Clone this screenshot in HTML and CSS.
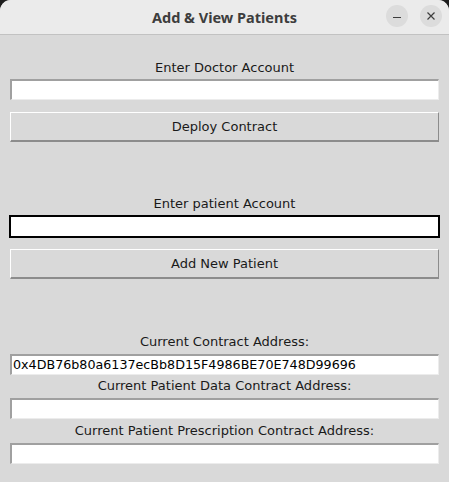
FILE: index.html
```html
<!DOCTYPE html>
<html>
<head>
<meta charset="utf-8">
<link rel="stylesheet" href="styles.css">
</head>
<body>
<div class="window">
  <div class="titlebar">
    <div class="title">Add &amp; View Patients</div>
    <div class="controls">
      <div class="ctl"><svg width="10" height="10" viewBox="0 0 10 10"><path d="M1 6.5h8" stroke="#3d3d3d" stroke-width="1.2"/></svg></div>
      <div class="ctl"><svg width="10" height="10" viewBox="0 0 10 10"><path d="M1.5 1.5l7 7M8.5 1.5l-7 7" stroke="#3d3d3d" stroke-width="1.2"/></svg></div>
    </div>
  </div>
  <div class="content">
    <div class="label l1">Enter Doctor Account</div>
    <div class="entry e1"></div>
    <div class="button b1">Deploy Contract</div>
    <div class="label l2">Enter patient Account</div>
    <div class="entry focus"></div>
    <div class="button b2">Add New Patient</div>
    <div class="label l3">Current Contract Address:</div>
    <div class="entry e3">0x4DB76b80a6137ecBb8D15F4986BE70E748D99696</div>
    <div class="label l4">Current Patient Data Contract Address:</div>
    <div class="entry e4"></div>
    <div class="label l5">Current Patient Prescription Contract Address:</div>
    <div class="entry e5"></div>
  </div>
</div>
</body>
</html>
```
FILE: styles.css
```css
html, body {
  margin: 0;
  padding: 0;
  background: #1e1e1e;
  width: 449px;
  height: 482px;
  overflow: hidden;
}
.window {
  width: 449px;
  height: 482px;
  background: #d9d9d9;
  border-radius: 11px 11px 0 0;
  overflow: hidden;
  display: flex;
  flex-direction: column;
}
.titlebar {
  height: 34px;
  background: #ebebeb;
  border-bottom: 1px solid #c2c2c2;
  position: relative;
  display: flex;
  align-items: center;
  justify-content: center;
  flex-shrink: 0;
}
.title {
  font-family: "Noto Sans", sans-serif;
  font-weight: bold;
  font-size: 14.5px;
  color: #3d3d3d;
}
.controls {
  position: absolute;
  right: 7px;
  top: 5px;
  display: flex;
  gap: 12px;
}
.ctl {
  width: 22px;
  height: 22px;
  border-radius: 50%;
  background: #dcdcdc;
  display: flex;
  align-items: center;
  justify-content: center;
}
.content {
  display: flex;
  flex-direction: column;
  padding: 0 10px 0 10px;
}
.label {
  font-family: "DejaVu Sans", sans-serif;
  font-size: 13px;
  color: #1a1a1a;
  height: 18px;
  line-height: 18px;
  text-align: center;
}
.entry {
  height: 21px;
  box-sizing: border-box;
  background: #ffffff;
  border-top: 2px solid #a0a0a0;
  border-left: 2px solid #a0a0a0;
  border-bottom: 1px solid #ececec;
  border-right: 1px solid #ececec;
  font-family: "DejaVu Sans", sans-serif;
  font-size: 12.7px;
  line-height: 18px;
  color: #000;
  padding-left: 1px;
  white-space: nowrap;
}
.entry.focus {
  height: 23px;
  margin: 2px -1px 0 -1px;
  border: 2px solid #000;
}
.button {
  height: 30px;
  box-sizing: border-box;
  background: #d9d9d9;
  border-top: 1px solid #ffffff;
  border-left: 1px solid #ffffff;
  border-bottom: 2px solid #8c8c8c;
  border-right: 1px solid #8c8c8c;
  font-family: "DejaVu Sans", sans-serif;
  font-size: 13px;
  color: #1a1a1a;
  display: flex;
  align-items: center;
  justify-content: center;
}
.l1 { margin-top: 24px; }
.e1 { margin-top: 2px; }
.b1 { margin-top: 12px; }
.l2 { margin-top: 53px; }
.b2 { margin-top: 11px; }
.l3 { margin-top: 54px; }
.e3 { margin-top: 3px; }
.l4 { margin-top: 2px; }
.e4 { margin-top: 3px; }
.l5 { margin-top: 3px; }
.e5 { margin-top: 3px; }
```
